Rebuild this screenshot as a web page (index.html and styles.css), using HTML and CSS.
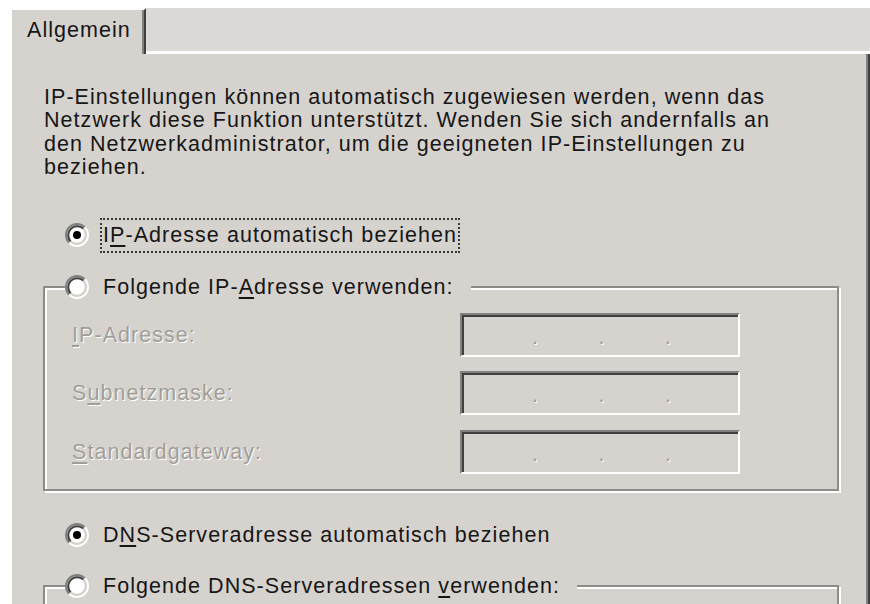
FILE: index.html
```html
<!DOCTYPE html>
<html lang="de">
<head>
    <meta charset="UTF-8">
    <title>Internetprotokoll (TCP/IP) - Eigenschaften</title>
    <link rel="stylesheet" href="styles.css">
</head>
<body>
    <svg class="defs" aria-hidden="true">
        <symbol id="radio-off" viewBox="0 0 12 12">
            <circle cx="6" cy="6" r="4.2" fill="#fff"/>
            <path d="M9.89 2.11A5.5 5.5 0 0 0 2.11 9.89" fill="none" stroke="#808080"/>
            <path d="M2.11 9.89A5.5 5.5 0 0 0 9.89 2.11" fill="none" stroke="#fff"/>
            <path d="M9.18 2.82A4.5 4.5 0 0 0 2.82 9.18" fill="none" stroke="#404040"/>
            <path d="M2.82 9.18A4.5 4.5 0 0 0 9.18 2.82" fill="none" stroke="#d4d0c8"/>
        </symbol>
        <symbol id="radio-on" viewBox="0 0 12 12">
            <use href="#radio-off"/>
            <circle cx="6" cy="6" r="2" fill="#000"/>
        </symbol>
    </svg>

    <div class="dialog">
        <div class="tabbar">
            <div class="tab">Allgemein</div>
            <div class="tab-rest"></div>
        </div>

        <div class="panel">
            <p class="intro">
                IP-Einstellungen können automatisch zugewiesen werden, wenn das<br>
                Netzwerk diese Funktion unterstützt. Wenden Sie sich andernfalls an<br>
                den Netzwerkadministrator, um die geeigneten IP-Einstellungen zu<br>
                beziehen.
            </p>

            <div class="option auto-ip">
                <svg class="radio"><use href="#radio-on"/></svg>
                <span class="option-label focus">I<u>P</u>-Adresse automatisch beziehen</span>
            </div>

            <fieldset class="group">
                <legend class="option">
                    <svg class="radio"><use href="#radio-off"/></svg>
                    <span class="option-label">Folgende IP-<u>A</u>dresse verwenden:</span>
                </legend>
                <div class="fields">
                    <span class="field-label"><u>I</u>P-Adresse:</span>
                    <div class="ip-field"><span class="dot">.</span><span class="dot">.</span><span class="dot">.</span></div>

                    <span class="field-label">S<u>u</u>bnetzmaske:</span>
                    <div class="ip-field"><span class="dot">.</span><span class="dot">.</span><span class="dot">.</span></div>

                    <span class="field-label"><u>S</u>tandardgateway:</span>
                    <div class="ip-field"><span class="dot">.</span><span class="dot">.</span><span class="dot">.</span></div>
                </div>
            </fieldset>

            <div class="option dns-auto">
                <svg class="radio"><use href="#radio-on"/></svg>
                <span class="option-label">D<u>N</u>S-Serveradresse automatisch beziehen</span>
            </div>

            <fieldset class="group group-dns">
                <legend class="option">
                    <svg class="radio"><use href="#radio-off"/></svg>
                    <span class="option-label">Folgende DNS-Serveradressen <u>v</u>erwenden:</span>
                </legend>
            </fieldset>
        </div>
    </div>
</body>
</html>
```

FILE: styles.css
```css
body { margin: 0; height: 604px; overflow: hidden; background: #fff; color: #161616; font-family: "Liberation Sans", Arial, sans-serif; font-size: 21.5px; letter-spacing: 1.05px; }
.defs { display: block; width: 0; height: 0; overflow: hidden; }
u { text-decoration-thickness: 2px; text-underline-offset: 3px; }

.dialog { margin: 8px 0 0 10px; width: 860px; }
.tabbar { display: flex; height: 46px; background: #dcdad6; }
.tab { box-sizing: border-box; width: 136px; display: flex; align-items: center; padding: 0 0 3px 15px; background: #d6d3ce; border-top: 2px solid #fff; border-left: 2px solid #fff; border-right: 2px solid #404040; box-shadow: inset -2px 0 #808080; }
.tab-rest { flex: 1; border-bottom: 3px solid #fff; }

.panel { height: 600px; padding-top: 32px; background: #d6d3ce; border-left: 2px solid #fff; border-right: 2px solid #404040; box-shadow: inset -2px 0 #808080; }
.intro { margin: 0 0 0 32px; line-height: 23.3px; }

.option { display: flex; align-items: center; height: 24px; }
.panel > .option { margin-left: 53px; }
.radio { flex: none; width: 24px; height: 24px; margin-right: 11px; }
.option-label { padding: 0 1px; border: solid transparent; border-width: 0 2px; line-height: 24px; white-space: nowrap; }
.option-label.focus { border: 2px dotted #3a3a3a; padding: 3.5px 1px; }
.auto-ip { height: 35px; margin-top: 38.8px; }
.dns-auto { margin-top: 32px; }

.group { box-sizing: border-box; width: 796px; min-width: 0; margin: 22px 0 0 31px; padding: 14px 0 15px 20px; border: 2px solid #8e8c88; box-shadow: inset 2px 2px #fff, 2px 2px #fff; }
.group legend { padding: 0 14px 0 0; background: #d6d3ce; }
.group-dns { height: 200px; margin-top: 27px; }

.fields { display: grid; grid-template-columns: 388px 280px; row-gap: 14.5px; align-items: center; padding-left: 7px; }
.field-label { line-height: 24px; color: #a09e99; text-shadow: 1px 1px 0 #fff; }
.ip-field { box-sizing: border-box; height: 44px; display: flex; gap: 60.5px; padding: 11px 0 0 70px; border: 2px solid; border-color: #808080 #fff #fff #808080; box-shadow: inset 2px 2px #404040; line-height: 23px; color: #a09e99; text-shadow: 1px 1px 0 #fff; }
.dot { width: 6px; text-align: center; letter-spacing: 0; }
```
